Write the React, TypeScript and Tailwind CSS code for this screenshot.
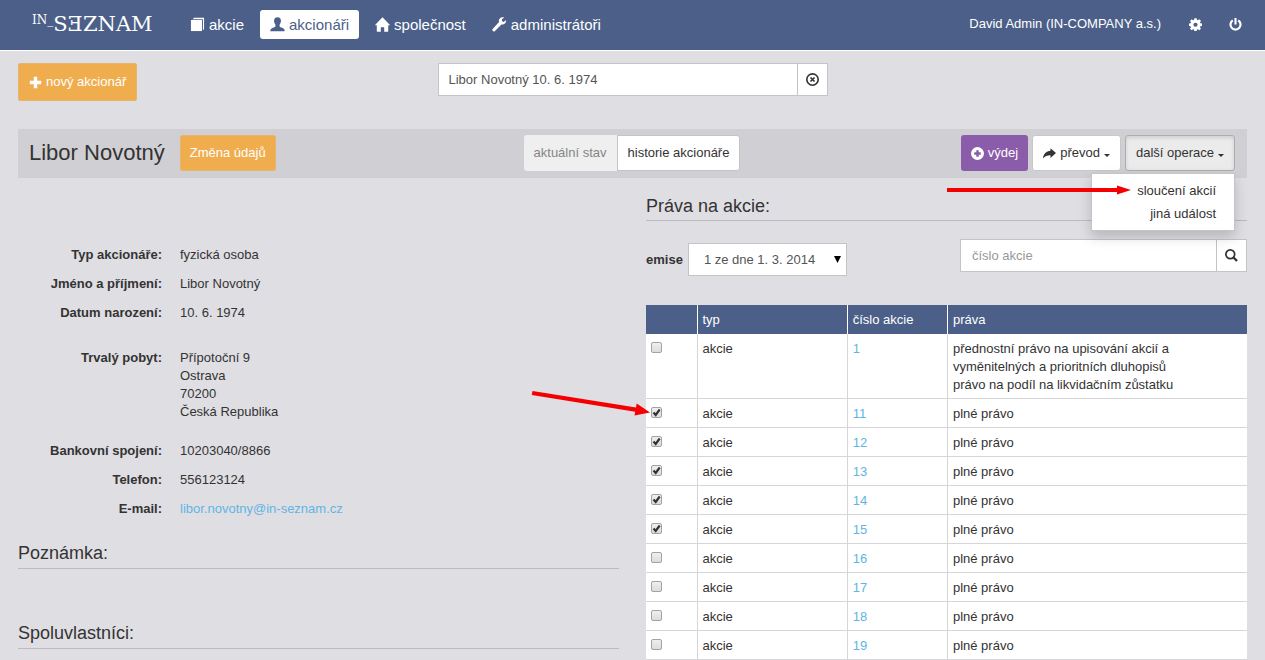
import type { ReactNode } from "react";

const icons: Record<string, ReactNode> = {
  book: (
    <>
      <path d="M2.500 2.800 4.300.7H15v12l-1.200 1.500V2.300H3.300Z" />
      <path d="M1 3.200h11.800V15H1Z" />
    </>
  ),
  user: (
    <path d="M8 .2c2.500 0 3.700 1.700 3.700 3.900 0 1.500-.6 3-1.500 4.100v1.300c0 .8.600 1.100 1.800 1.600 2.200.9 3.700 1.500 3.700 4.200H.3c0-2.700 1.500-3.300 3.700-4.200 1.200-.5 1.800-.8 1.800-1.600V8.200C4.900 7.100 4.300 5.600 4.300 4.100 4.300 1.900 5.500.2 8 .2Z" />
  ),
  home: (
    <path d="M8 .2 16.200 8.700h-2.100V15a.6.6 0 0 1-.6.6H9.800v-4.700H6.200v4.700H2.500a.6.6 0 0 1-.6-.6V8.700H-.2Z" />
  ),
  wrench: (
    <path d="M14.900 3.500 12.200 5.200l-1.600-1 .1-2L13 .7c-1.700-.7-3.600-.4-4.700.9-1 1.100-1.200 2.500-.8 3.800L.9 12.600c-.7.7-.7 1.700 0 2.400.7.6 1.700.6 2.300-.1l6.900-7c1.300.4 2.700 0 3.700-1 1-1 1.400-2.300 1.100-3.400Z" />
  ),
  cog: (
    <path
      fillRule="evenodd"
      d="M6.600.2h2.800l.4 2.100 1.200.5L12.800 1.600l2 2-1.300 1.700.5 1.300 2 .3v2.800l-2 .4-.5 1.200 1.200 1.800-2 2-1.700-1.300-1.200.5-.4 2H6.600l-.4-2-1.200-.5-1.800 1.200-2-2 1.300-1.700L2 10.100l-2-.4V6.900l2-.4.500-1.200L1.300 3.600l2-2L5 2.900l1.200-.5ZM8 5.700a2.600 2.600 0 1 0 0 5.200 2.600 2.600 0 0 0 0-5.200Z"
    />
  ),
  power: (
    <>
      <path
        d="M4.600 2.900a6.200 6.200 0 1 0 6.800 0"
        fill="none"
        stroke="currentColor"
        strokeWidth="2.700"
      />
      <path d="M6.700 0h2.600v8H6.700Z" />
    </>
  ),
  plus: <path d="M5.900 1h4.200v4.900H15v4.200h-4.900V15H5.900v-4.900H1V5.900h4.900Z" />,
  plusCircle: (
    <path
      fillRule="evenodd"
      d="M8 0a8 8 0 1 1 0 16A8 8 0 0 1 8 0ZM6.500 4v2.500H4v3h2.500V12h3V9.500H12v-3H9.500V4Z"
    />
  ),
  removeCircle: (
    <>
      <circle cx="8" cy="8" r="7" fill="none" stroke="currentColor" strokeWidth="2" />
      <path d="m5.500 5.500 5 5m0-5-5 5" stroke="currentColor" strokeWidth="2" />
    </>
  ),
  share: <path d="M9.200 1.500 16 7.500l-6.800 6v-3.400C5.500 10 2.500 11 0 14c.5-5.200 4-9 9.200-9.400Z" />,
  search: (
    <>
      <circle cx="6.500" cy="6.500" r="5.400" fill="none" stroke="currentColor" strokeWidth="2.100" />
      <path d="m10.200 10.200 4.600 4.600" stroke="currentColor" strokeWidth="2.900" />
    </>
  ),
};

function Icon({ name, className }: { name: string; className: string }) {
  return (
    <svg viewBox="0 0 16 16" fill="currentColor" aria-hidden="true" className={className}>
      {icons[name]}
    </svg>
  );
}

function Caret() {
  return (
    <svg viewBox="0 0 6 3" fill="currentColor" aria-hidden="true" className="mt-1 h-[3px] w-1.5">
      <path d="M0 0h6L3 3Z" />
    </svg>
  );
}

const menu = [
  { icon: "book", label: "akcie" },
  { icon: "user", label: "akcionáři", active: true },
  { icon: "home", label: "společnost" },
  { icon: "wrench", label: "administrátoři" },
];

const details = [
  {
    className: "mt-[68px]",
    rows: [
      { label: "Typ akcionáře:", value: ["fyzická osoba"] },
      { label: "Jméno a příjmení:", value: ["Libor Novotný"] },
      { label: "Datum narození:", value: ["10. 6. 1974"] },
    ],
  },
  {
    className: "mt-[27px]",
    rows: [
      { label: "Trvalý pobyt:", value: ["Přípotoční 9", "Ostrava", "70200", "Česká Republika"] },
    ],
  },
  {
    className: "mt-[21px]",
    rows: [
      { label: "Bankovní spojení:", value: ["10203040/8866"] },
      { label: "Telefon:", value: ["556123124"] },
      { label: "E-mail:", value: ["libor.novotny@in-seznam.cz"], link: true },
    ],
  },
];

const shares = [
  {
    id: 1,
    rights: [
      "přednostní právo na upisování akcií a",
      "vyměnitelných a prioritních dluhopisů",
      "právo na podíl na likvidačním zůstatku",
    ],
  },
  { id: 11, rights: ["plné právo"], checked: true },
  { id: 12, rights: ["plné právo"], checked: true },
  { id: 13, rights: ["plné právo"], checked: true },
  { id: 14, rights: ["plné právo"], checked: true },
  { id: 15, rights: ["plné právo"], checked: true },
  { id: 16, rights: ["plné právo"] },
  { id: 17, rights: ["plné právo"] },
  { id: 18, rights: ["plné právo"] },
  { id: 19, rights: ["plné právo"] },
];

function Header() {
  return (
    <header className="flex h-[51px] items-center border-b border-white bg-[#4b5f89] pr-[23px] pb-0.5 pl-8 text-white">
      <a href="#" className="flex w-[148px] items-start font-['DejaVu_Serif',serif] text-[21px] leading-6">
        <span className="text-[12px] leading-4">IN_</span>
        <span>SƎZNAM</span>
      </a>
      <nav className="flex gap-1.5 text-[15px] leading-[29px]">
        {menu.map((item) => (
          <a
            key={item.label}
            href="#"
            className={
              item.active
                ? "flex items-center gap-1 rounded-[3px] bg-white px-2.5 text-[#4b5f89]"
                : "flex items-center gap-1 px-2.5"
            }
          >
            <Icon name={item.icon} className="size-[15px] overflow-visible" />
            {item.label}
          </a>
        ))}
      </nav>
      <div className="ml-auto flex items-center">
        <span className="mr-7">David Admin (IN-COMPANY a.s.)</span>
        <button type="button" aria-label="Nastavení" className="mr-[27px]">
          <Icon name="cog" className="size-[13px]" />
        </button>
        <button type="button" aria-label="Odhlásit">
          <Icon name="power" className="size-[13px]" />
        </button>
      </div>
    </header>
  );
}

function TitleBar() {
  return (
    <div className="mt-7 grid h-[49px] grid-cols-[1fr_auto_1fr] items-center bg-[#d0cfd4] pr-3 pb-px pl-[11px]">
      <div className="flex items-center gap-[15px]">
        <h1 className="text-[22px]">Libor Novotný</h1>
        <button type="button" className="h-9 rounded-[2px] border border-[#e5b574] bg-[#f0ad4e] px-[9px] text-white">
          Změna údajů
        </button>
      </div>
      <div className="flex">
        <button type="button" disabled className="h-9 rounded-l-[3px] bg-[#efeff0] px-2.5 text-[#858585]">
          aktuální stav
        </button>
        <button type="button" className="h-9 rounded-r-[3px] border border-[#c4c4c6] bg-white px-2.5">
          historie akcionáře
        </button>
      </div>
      <div className="flex justify-end gap-1">
        <button
          type="button"
          className="flex h-9 items-center gap-1 rounded-[3px] bg-[#8a5ca9] px-2.5 text-white"
        >
          <Icon name="plusCircle" className="size-[13px]" />
          výdej
        </button>
        <button type="button" className="flex h-9 items-center gap-1 rounded-[3px] border border-[#c8c8ca] bg-white px-2.5">
          <Icon name="share" className="size-[13px]" />
          převod
          <Caret />
        </button>
        <div className="relative">
          <button
            type="button"
            className="flex h-9 items-center gap-1 rounded-[3px] border border-[#adadad] bg-[#ebebeb] px-2.5 shadow-[inset_0_2px_4px_rgba(0,0,0,0.12)]"
          >
            další operace
            <Caret />
          </button>
          <div className="absolute top-full right-0 z-10 mt-0.5 w-36 border border-[#c4c4c6] bg-white py-[5px] text-right shadow-[0_6px_12px_rgba(0,0,0,0.18)]">
            <a href="#" className="block pr-[18px] leading-[23px]">
              sloučení akcií
            </a>
            <a href="#" className="block pr-[18px] leading-[23px]">
              jiná událost
            </a>
            <svg
              viewBox="0 0 184 12"
              fill="#f40000"
              aria-hidden="true"
              className="absolute top-2.5 right-[103px] h-3 w-[184px]"
            >
              <path d="M0 4h170V1.500L184 6l-14 4.500V8H0Z" />
            </svg>
          </div>
        </div>
      </div>
    </div>
  );
}

function Details() {
  return (
    <section>
      {details.map((group) => (
        <dl key={group.className} className={"flex flex-col gap-[11px] " + group.className}>
          {group.rows.map((row) => (
            <div key={row.label} className="flex gap-[18px]">
              <dt className="w-36 text-right font-bold">{row.label}</dt>
              <dd>
                {row.value.map((line) =>
                  row.link ? (
                    <a key={line} href={"mailto:" + line} className="text-[#5fb5e3]">
                      {line}
                    </a>
                  ) : (
                    <div key={line}>{line}</div>
                  )
                )}
              </dd>
            </div>
          ))}
        </dl>
      ))}
      <h2 className="mt-[23px] border-b border-[#bcbcc0] pb-[3px] text-[18px] leading-6">Poznámka:</h2>
      <h2 className="mt-[52px] border-b border-[#bcbcc0] pb-[3px] text-[18px] leading-6">Spoluvlastníci:</h2>
    </section>
  );
}

function Shares() {
  return (
    <section>
      <h2 className="mt-4 border-b border-[#bcbcc0] pb-0.5 text-[18px] leading-6">Práva na akcie:</h2>
      <div className="mt-[18px] flex items-start justify-between">
        <div className="mt-1 flex items-center gap-[5px]">
          <label htmlFor="emise" className="font-bold">
            emise
          </label>
          <div className="relative">
            <select
              id="emise"
              className="h-[33px] w-[159px] appearance-none border border-[#c4c4c6] bg-white pl-[15px] text-[#555]"
            >
              <option>1 ze dne 1. 3. 2014</option>
            </select>
            <svg
              viewBox="0 0 7 7"
              aria-hidden="true"
              className="pointer-events-none absolute top-[13px] right-1.5 size-[7px]"
            >
              <path d="M0 0h7L3.500 7Z" />
            </svg>
          </div>
        </div>
        <form className="flex h-[33px] w-[287px] border border-[#c4c4c6] bg-white">
          <input
            type="text"
            aria-label="číslo akcie"
            placeholder="číslo akcie"
            className="min-w-0 flex-1 px-[11px] placeholder:text-[#999]"
          />
          <button type="button" aria-label="Hledat" className="flex w-[30px] items-center justify-center border-l border-[#c4c4c6]">
            <Icon name="search" className="size-[13px]" />
          </button>
        </form>
      </div>
      <table className="mt-[29px] w-full table-fixed border-collapse bg-white">
        <thead>
          <tr className="h-[29px] bg-[#4b5f89] text-left text-white">
            <th aria-label="výběr" className="w-[51px]" />
            <th className="w-1/4 border-l border-white px-[5px] font-normal">typ</th>
            <th className="w-1/6 border-l border-white px-[5px] font-normal">číslo akcie</th>
            <th className="border-l border-white px-[5px] font-normal">práva</th>
          </tr>
        </thead>
        <tbody>
          {shares.map((share) => (
            <tr key={share.id} className="border-b border-[#d6d6d8] align-top">
              <td className="px-[5px] pt-2">
                <div className="relative flex">
                  <input
                    type="checkbox"
                    aria-label={"akcie " + share.id}
                    defaultChecked={share.checked}
                    className="peer size-[11px] appearance-none rounded-[2px] border border-[#a3a3a3] bg-linear-to-b from-[#efefef] to-[#dcdcdc]"
                  />
                  <svg
                    viewBox="0 0 11 11"
                    aria-hidden="true"
                    className="pointer-events-none absolute top-0 left-0 hidden size-[11px] peer-checked:block"
                  >
                    <path d="m2.500 5.500 2.200 2.500 4-5.500" fill="none" stroke="#333" strokeWidth="2.200" />
                  </svg>
                  {share.id === 11 && (
                    <svg
                      viewBox="0 0 120 30"
                      fill="#f40000"
                      aria-hidden="true"
                      className="absolute -top-4 right-full h-[30px] w-[120px]"
                    >
                      <path d="M1.500 0 105 16.500l.7-4L119 21.500 103.500 24.500l.7-3.700L.8 4Z" />
                    </svg>
                  )}
                </div>
              </td>
              <td className="border-l border-[#d6d6d8] px-[5px] pt-1.5 pb-1">akcie</td>
              <td className="border-l border-[#d6d6d8] px-[5px] pt-1.5 pb-1">
                <a href="#" className="text-[#5fb5e3]">
                  {share.id}
                </a>
              </td>
              <td className="border-l border-[#d6d6d8] px-[5px] pt-1.5 pb-1">
                {share.rights.map((right) => (
                  <div key={right}>{right}</div>
                ))}
              </td>
            </tr>
          ))}
        </tbody>
      </table>
    </section>
  );
}

export default function App() {
  return (
    <div className="min-h-screen bg-[#dfdee3] font-['Liberation_Sans',Arial,sans-serif] text-[13px] leading-[18px] text-[#333]">
      <Header />
      <main className="px-[18px] pt-3">
        {/* new shareholder + search */}
        <div className="grid grid-cols-[1fr_390px_1fr] items-start">
          <button
            type="button"
            className="flex h-[38px] items-center gap-1 justify-self-start rounded-[2px] border border-[#e5b574] bg-[#f0ad4e] px-2.5 text-white"
          >
            <Icon name="plus" className="size-[13px]" />
            nový akcionář
          </button>
          <form className="flex h-[33px] border border-[#c4c4c6] bg-white">
            <input
              type="text"
              aria-label="Akcionář"
              defaultValue="Libor Novotný 10. 6. 1974"
              className="min-w-0 flex-1 px-2.5 text-[#555]"
            />
            <button type="button" aria-label="Zrušit" className="flex w-[30px] items-center justify-center border-l border-[#c4c4c6]">
              <Icon name="removeCircle" className="size-[13px]" />
            </button>
          </form>
        </div>
        <TitleBar />
        <div className="grid grid-cols-2 gap-[27px]">
          <Details />
          <Shares />
        </div>
      </main>
    </div>
  );
}
